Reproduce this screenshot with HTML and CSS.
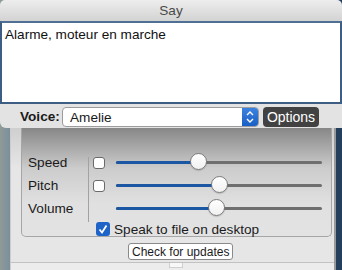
FILE: index.html
```html
<!DOCTYPE html>
<html lang="fr">
<head>
    <meta charset="UTF-8">
    <title>Say</title>
    <link rel="stylesheet" href="styles.css">
</head>
<body>
    <div class="sheet">
        <div class="titlebar">Say</div>
        <div class="text">Alarme, moteur en marche</div>
        <div class="voice">
            <span class="voice-label">Voice:</span>
            <div class="select">
                <span class="select-value">Amelie</span>
                <span class="stepper">
                    <svg width="16" height="18" viewBox="0 0 16 18">
                        <polyline points="5,7 8,4 11,7" fill="none" stroke="#fff" stroke-width="1.4"/>
                        <polyline points="5,11 8,14 11,11" fill="none" stroke="#fff" stroke-width="1.4"/>
                    </svg>
                </span>
            </div>
            <button class="options">Options</button>
        </div>
    </div>

    <div class="window">
        <div class="group">
            <div class="params">
                <div class="labels">
                    <div class="row">Speed</div>
                    <div class="row">Pitch</div>
                    <div class="row">Volume</div>
                </div>
                <div class="divider"></div>
                <div class="controls">
                    <div class="row">
                        <span class="check"></span>
                        <div class="slider"><div class="fill" style="width: 40%"></div><span class="knob" style="left: 40%"></span></div>
                    </div>
                    <div class="row">
                        <span class="check"></span>
                        <div class="slider"><div class="fill" style="width: 50%"></div><span class="knob" style="left: 50%"></span></div>
                    </div>
                    <div class="row">
                        <span class="check blank"></span>
                        <div class="slider"><div class="fill" style="width: 48.5%"></div><span class="knob" style="left: 48.5%"></span></div>
                    </div>
                </div>
            </div>
            <div class="speak">
                <span class="check on">
                    <svg width="14" height="14" viewBox="0 0 14 14">
                        <polyline points="3.5,7.5 6,10.5 10.5,3.5" fill="none" stroke="#fff" stroke-width="1.8"/>
                    </svg>
                </span>
                Speak to file on desktop
            </div>
        </div>
        <div class="footer">
            <button class="update">Check for updates</button>
        </div>
        <div class="strip"><span class="tab"></span></div>
    </div>
</body>
</html>
```

FILE: styles.css
```css
body {
    margin: 0;
    height: 270px;
    overflow: hidden;
    font-family: "Liberation Sans", Arial, sans-serif;
    font-size: 13.6px;
    color: #1a1a1a;
    background: linear-gradient(to right, #8f9a98 0, #7b8f9c 10px, #233f5c 10px);
}
.titlebar {
    height: 21px;
    line-height: 22px;
    text-align: center;
    color: #4a4a4a;
    background: linear-gradient(#ededed, #d3d3d3);
    border-radius: 5px 5px 0 0;
}
.text {
    box-sizing: border-box;
    height: 83px;
    padding: 4px 3px;
    line-height: 16px;
    background: #fff;
    border: 2px solid #3e5d82;
    border-top-color: #4f6f95;
    color: #111;
}
.voice {
    height: 24px;
    display: flex;
    align-items: center;
    padding-left: 20px;
    background: #e3e3e3;
    border-radius: 0 0 0 6px;
}
.voice-label {
    font-weight: bold;
    width: 42px;
    margin-top: 1px;
}
.select {
    box-sizing: border-box;
    width: 197px;
    height: 20px;
    margin-top: 2px;
    display: flex;
    align-items: center;
    justify-content: space-between;
    background: #fff;
    border: 1px solid #9c9c9c;
    border-radius: 4px;
    overflow: hidden;
}
.select-value {
    padding-left: 7px;
}
.stepper {
    width: 16px;
    height: 18px;
    background: linear-gradient(#3b82e0, #1a5fc4);
}
.stepper svg {
    display: block;
}
.options {
    margin: 2px 0 0 4px;
    width: 56px;
    height: 20px;
    padding: 0;
    border: none;
    border-radius: 4px;
    background: #424242;
    color: #fff;
    font-family: inherit;
    font-size: 14px;
}
.window {
    box-sizing: border-box;
    margin-left: 10px;
    width: 326px;
    height: 142px;
    background: linear-gradient(#cfcfcf, #e6e6e6 40px);
    border-left: 1px solid #cdcdcd;
    border-right: 2px solid #9a9a9a;
}
.group {
    box-sizing: border-box;
    margin-left: 10px;
    width: 311px;
    height: 109px;
    padding: 23px 0 0 6px;
    border: 1px solid #a6a6a6;
    border-top: none;
    border-radius: 0 0 5px 5px;
    background: linear-gradient(#878787, #cccccc 40px, #e0e0e0 75px, #e3e3e3);
}
.params {
    display: flex;
}
.row {
    height: 23px;
    display: flex;
    align-items: center;
}
.labels {
    width: 60px;
}
.divider {
    width: 1px;
    margin: 6px 0 -2px;
    background: #a2a2a2;
}
.controls {
    padding-left: 4px;
}
.check {
    box-sizing: border-box;
    width: 12px;
    height: 12px;
    background: #fff;
    border: 1px solid #6a6a6a;
    border-radius: 3px;
}
.check.blank {
    visibility: hidden;
}
.slider {
    position: relative;
    margin-left: 11px;
    width: 206px;
    height: 3px;
    background: #6f6f6f;
    border-radius: 2px;
}
.fill {
    height: 3px;
    background: #1b57a3;
    border-radius: 2px 0 0 2px;
}
.knob {
    position: absolute;
    top: -8px;
    box-sizing: border-box;
    width: 17px;
    height: 17px;
    margin-left: -8px;
    border: 1px solid #7c7c7c;
    border-radius: 50%;
    background: linear-gradient(#ffffff, #f1f1f1);
    box-shadow: 0 1px 1px rgba(0, 0, 0, 0.15);
}
.speak {
    height: 18px;
    display: flex;
    align-items: center;
    margin-left: 68px;
    gap: 4px;
}
.check.on {
    width: 14px;
    height: 14px;
    border: none;
    background: #1d63c8;
}
.check.on svg {
    display: block;
}
.footer {
    height: 25px;
    padding-left: 117px;
    box-sizing: border-box;
    padding-top: 6px;
}
.update {
    display: block;
    height: 17px;
    padding: 0 3px;
    border: 1px solid #8a8a8a;
    border-radius: 3px;
    background: #fff;
    color: #1a1a1a;
    font-family: inherit;
    font-size: 12px;
}
.strip {
    height: 8px;
    border-top: 1px solid #c2c2c2;
    background: #ececec;
}
.tab {
    display: block;
    margin-left: 158px;
    width: 12px;
    height: 4px;
    background: #f8f8f8;
    border: 1px solid #d0d0d0;
    border-top: none;
}
```
